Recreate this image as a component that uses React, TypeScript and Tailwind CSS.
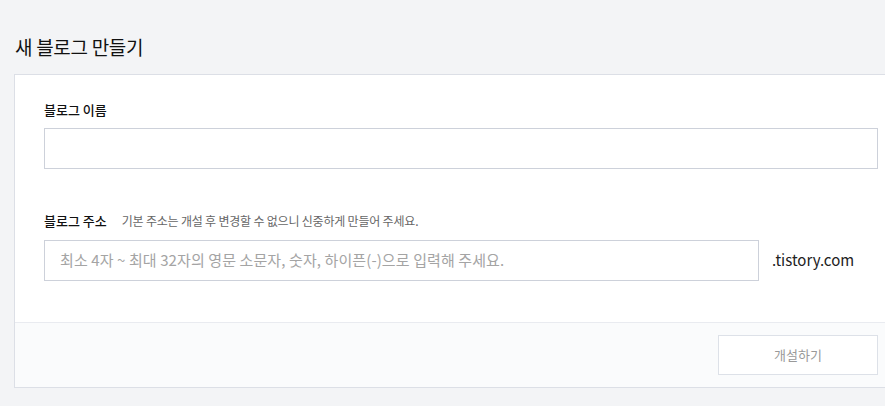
import React from "react";

export default function App() {
  const font = { fontFamily: '"Noto Sans CJK KR", "Noto Sans", sans-serif' };
  return (
    <div
      className="w-[885px] h-[406px] overflow-hidden bg-[#f3f4f6] text-[#222]"
      style={font}
    >
      <div className="pl-[15px] pt-[33px] h-[74px]">
        <h1 className="text-[19px] leading-[28px] font-normal tracking-[-0.3px] text-[#111]">
          새 블로그 만들기
        </h1>
      </div>
      <div className="ml-[14px] w-[900px] border border-[#dcdfe6] bg-white">
        <div className="pl-[29px] pr-[36px] pt-[25px] pb-[41px]">
          <label className="block text-[13px] leading-[20px] font-medium text-[#111] mb-[8px]">
            블로그 이름
          </label>
          <div className="w-[834px] h-[41px] border border-[#cdd1da] bg-white" />
          <div className="mt-[42px] mb-[9px] flex items-center h-[20px]">
            <span className="text-[13px] font-medium text-[#111]">
              블로그 주소
            </span>
            <span className="ml-[15px] text-[12px] tracking-[-0.2px] text-[#666]">
              기본 주소는 개설 후 변경할 수 없으니 신중하게 만들어 주세요.
            </span>
          </div>
          <div className="flex items-center">
            <div className="w-[715px] h-[41px] border border-[#cdd1da] bg-white flex items-center pl-[15px]">
              <span className="text-[15px] tracking-[0.1px] text-[#a4a4a4]">
                최소 4자 ~ 최대 32자의 영문 소문자, 숫자, 하이픈(-)으로 입력해 주세요.
              </span>
            </div>
            <span className="ml-[13px] text-[15px] text-[#222]">.tistory.com</span>
          </div>
        </div>
        <div className="border-t border-[#e9ebf0] bg-[#fafbfc] h-[65px] pl-[703px] pt-[12px]">
          <div className="w-[160px] h-[40px] border border-[#dde1e8] bg-white flex items-center justify-center">
            <span className="text-[13px] text-[#999]">개설하기</span>
          </div>
        </div>
      </div>
    </div>
  );
}
